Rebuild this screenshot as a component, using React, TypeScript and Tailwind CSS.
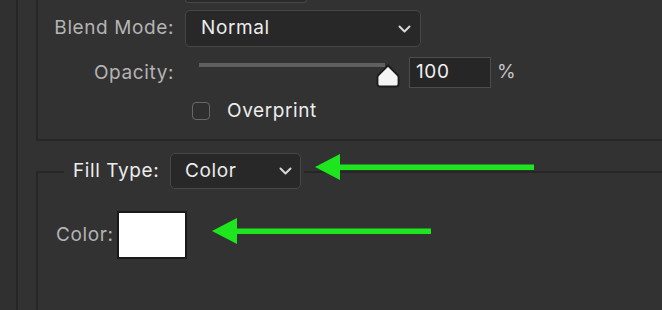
import React from 'react';

const Chevron = () => (
  <svg width="13" height="8" viewBox="0 0 13 8" fill="none">
    <path d="M1.5 1.5 L6.5 6.5 L11.5 1.5" stroke="#d8d8d8" strokeWidth="2" strokeLinecap="round" strokeLinejoin="round" />
  </svg>
);

const Arrow: React.FC<{ className: string; width: number }> = ({ className, width }) => (
  <svg className={className} width={width} height="26" viewBox={`0 0 ${width} 26`}>
    <polygon points="0,13 25,0 25,26" fill="#1ee61e" />
    <rect x="22" y="10.5" width={width - 22} height="5.5" fill="#1ee61e" />
  </svg>
);

const App: React.FC = () => {
  return (
    <div className="relative w-[662px] h-[310px] overflow-hidden bg-[#323232] font-['Inter','Liberation_Sans',sans-serif] text-[19px] tracking-[0.6px]">
      <div className="flex h-full">
        {/* outer gutter */}
        <div className="w-[16px] bg-[#303030]" />
        <div className="w-[2px] bg-[#262626]" />
        <div className="w-[18px]" />

        <div className="flex-1 flex flex-col">
          {/* stroke options box */}
          <div className="border-l-2 border-b-2 border-[#262626] pb-[19px]">
            <div className="ml-[147px] w-[122px] h-[3px] border-x border-b border-[#474747] rounded-b-[5px] bg-[#2a2a2a]" />

            <div className="flex items-center mt-[7px]">
              <div className="w-[136px] text-right text-[#b4b4b4]">Blend Mode:</div>
              <div className="ml-[11px] w-[236px] h-[37px] rounded-[5px] border border-[#474747] bg-[#282828] flex items-center justify-between pl-[15px] pr-[9px]">
                <span className="text-[#ececec]">Normal</span>
                <Chevron />
              </div>
            </div>

            <div className="flex items-center mt-[10px] h-[31px]">
              <div className="w-[136px] text-right text-[#b4b4b4] pt-[2px]">Opacity:</div>
              <div className="ml-[25px] relative w-[199px] h-[31px]">
                <div className="absolute left-0 top-[6px] w-[186px] h-[4px] bg-[#5f5f5f]" />
                <svg className="absolute left-[177px] top-[7px]" width="24" height="24" viewBox="0 0 24 24">
                  <path d="M12 1.5 L21.5 11 Q22.5 12 22.5 13.5 L22.5 20 Q22.5 22.5 20 22.5 L4 22.5 Q1.5 22.5 1.5 20 L1.5 13.5 Q1.5 12 2.5 11 Z" fill="#f4f4f4" stroke="#1c1c1c" strokeWidth="1.8" strokeLinejoin="round" />
                </svg>
              </div>
              <div className="ml-[11px] w-[82px] h-[31px] border-[1.5px] border-[#4c4c4c] bg-[#262626] flex items-center pl-[6px] text-[#f0f0f0]">
                100
              </div>
              <span className="ml-[6px] text-[#c4c4c4]">%</span>
            </div>

            <div className="flex items-center mt-[14px] h-[18px]">
              <div className="ml-[154px] w-[18px] h-[18px] rounded-[4px] border-[1.5px] border-[#686868] bg-[#2f2f2f]" />
              <span className="ml-[17px] text-[#ececec]">Overprint</span>
            </div>
          </div>

          {/* fill section */}
          <div className="flex mt-[12px] h-[36px]">
            <div className="self-end w-[28px] h-[18px] border-l-2 border-t-2 border-[#262626]" />
            <span className="ml-[9px] w-[86px] self-center whitespace-nowrap text-[#ececec]">Fill Type:</span>
            <div className="ml-[11px] w-[131px] h-[36px] rounded-[5px] border border-[#474747] bg-[#282828] flex items-center justify-between pl-[14px] pr-[8px]">
              <span className="text-[#ececec]">Color</span>
              <Chevron />
            </div>
            <div className="ml-[3px] flex-1 self-end h-[18px] border-t-2 border-[#262626]" />
          </div>
          <div className="flex-1 border-l-2 border-[#262626]">
            <div className="flex items-center mt-[22px]">
              <span className="ml-[18px] w-[61px] text-[#b4b4b4]">Color:</span>
              <div className="w-[70px] h-[48px] bg-white border-2 border-[#1a1a1a]" />
            </div>
          </div>
        </div>
      </div>

      <Arrow className="absolute left-[315px] top-[154px]" width={219} />
      <Arrow className="absolute left-[212px] top-[218px]" width={219} />
    </div>
  );
};

export default App;
